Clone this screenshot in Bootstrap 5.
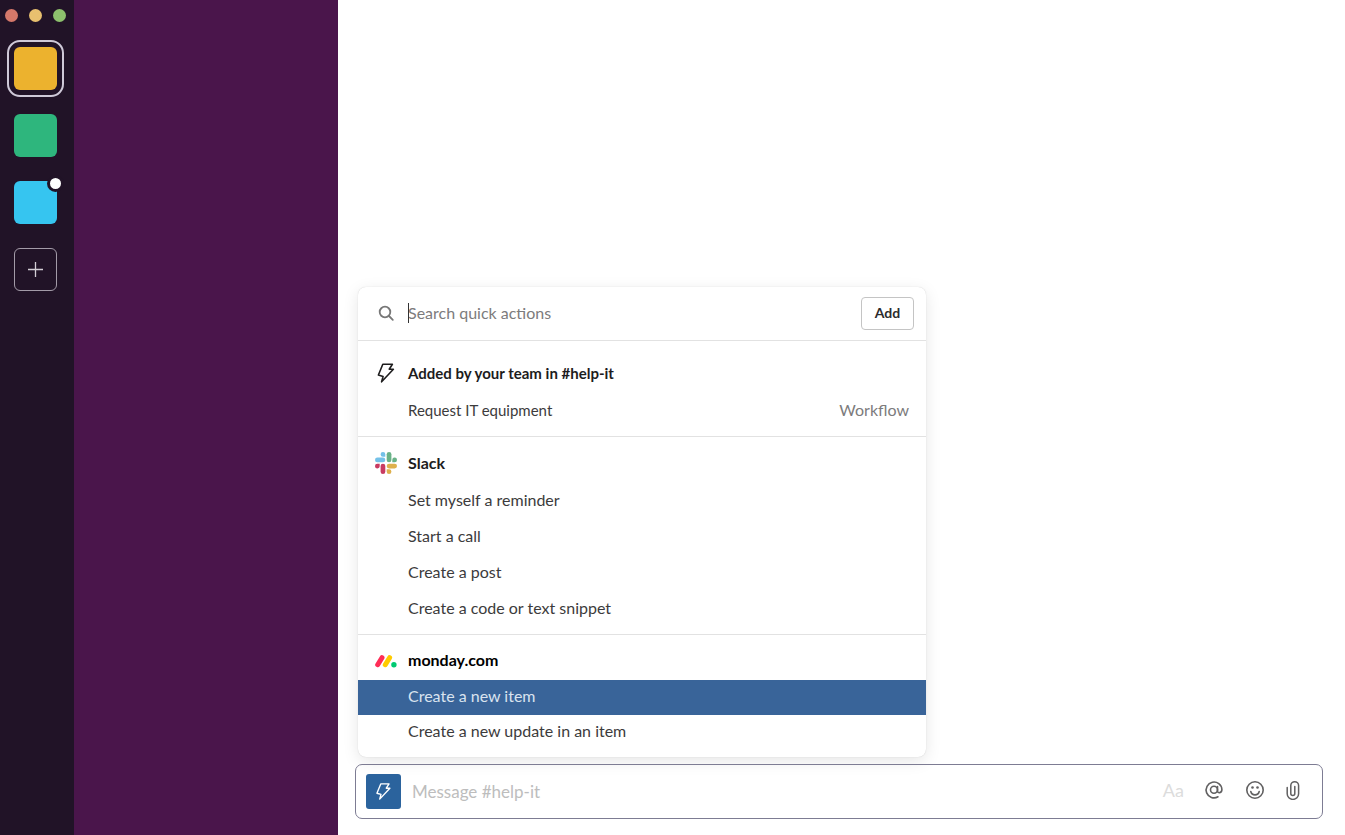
<!DOCTYPE html>
<html lang="en">
<head>
<meta charset="utf-8">
<meta name="viewport" content="width=device-width, initial-scale=1">
<title>#help-it</title>
<link rel="stylesheet" href="https://cdn.jsdelivr.net/npm/bootstrap@5.3.0/dist/css/bootstrap.min.css">
<style>
body{font-family:Lato,"Liberation Sans",sans-serif;font-size:16px;line-height:20px;color:#1d1c1d;background:#fff}
button,input{font-family:inherit}
.rail{width:74px;background:#211327;padding:9px 3px 0 0}
.lights{gap:11px;margin-bottom:25px}
.light{width:13px;height:13px;border-radius:50%}
.workspaces{gap:24px}
.ws{width:43px;height:43px;border:0;border-radius:6px;padding:0}
.ws-on{outline:2px solid #cfc9d8;outline-offset:5px}
.ws-add{border:1px solid #a39ba8;background:transparent}
.ws-dot{top:-6px;right:-7px;width:17px;height:17px;border-radius:50%;background:#fff;border:3px solid #211327}
.side{width:264px;background:#4a154b}
.main{padding:0 22px 16px 17px;gap:7px}
.panel{width:568px;margin-left:3px;border-radius:8px;background:#fff;box-shadow:0 0 1px rgba(0,0,0,.2),0 4px 16px rgba(0,0,0,.1)}
.search-row{height:54px;padding:0 12px 0 17px;border-bottom:1px solid #e2e2e2}
.search-row .ico,.search-row .position-relative{margin-bottom:2px}
.ico{width:22px;height:22px;margin-right:11px;flex:none}
.field{border:0;outline:0;background:transparent;padding:0;min-width:0}
.field::placeholder{color:#7c7b7c;opacity:1}
.caret{left:0;top:0;width:1px;height:20px;background:#333}
.btn-add{width:53px;height:33px;padding:0 0 2px;border:1px solid #c4c4c4;border-radius:4px;font-size:14px;font-weight:700;color:#2c2b2c;background:#fff}
.group{padding:6px 0 7px;border-bottom:1px solid #e2e2e2}
.group-first{padding-top:12px}
.group-last{padding-top:5px;border-bottom:0}
.group h2{height:40px;margin:0;padding-left:17px;font-size:16px;line-height:20px;font-weight:700}
.act{height:36px;width:100%;border:0;background:transparent;padding:0 17px 2px 50px;font-size:16px;color:#3c3b3c}
.group-last .act{height:35px;padding-bottom:3px}
.group-last h2{color:#000}
.act.on{background:#396499;color:#d9e3ef}
.kind{color:#7c7b7c}
.group h2.title-sm,.small-text{font-size:15px}
.composer{height:55px;border:1px solid #7d7c93;border-radius:7px;padding:0 20px 0 10px}
.bolt{width:35px;height:35px;border:0;border-radius:3px;background:#2b639d;padding:0;margin-right:11px}
.composer .field{font-size:17px}
.composer .field::placeholder{color:#bdbdbd}
.tool{border:0;background:transparent;padding:0 0 4px;color:#616061;line-height:20px}
.tool-aa{color:#dcdcdc;font-size:18px;margin-right:20px}
.tool-at{margin-right:21px}
.tool-face{margin-right:19px}
</style>
</head>
<body>
<svg class="d-none" aria-hidden="true"><symbol id="bolt" viewBox="0 0 22 22"><path d="M7.800 2.200h9.600l-3.200 5h4.200L6.600 19.800l1.500-5.400-4.700-1.400z" fill="none" stroke="currentColor" stroke-width="1.600" stroke-linejoin="round"/></symbol></svg>
<div class="d-flex min-vh-100">
  <nav class="rail d-flex flex-column align-items-center flex-shrink-0" aria-label="Workspaces">
    <div class="lights d-flex">
      <span class="light" style="background:#d5786a"></span><span class="light" style="background:#e8c06f"></span><span class="light" style="background:#8dc06d"></span>
    </div>
    <div class="workspaces d-flex flex-column">
      <button class="ws ws-on" style="background:#ecb22e" aria-label="Workspace 1"></button>
      <button class="ws" style="background:#2eb67d" aria-label="Workspace 2"></button>
      <button class="ws position-relative" style="background:#36c5f0" aria-label="Workspace 3"><span class="ws-dot position-absolute"></span></button>
      <button class="ws ws-add d-flex align-items-center justify-content-center" aria-label="Add workspace"><svg width="17" height="17" viewBox="0 0 17 17"><path d="M8.500 1v15M1 8.500h15" stroke="#d3ced5" stroke-width="1.300"/></svg></button>
    </div>
  </nav>
  <aside class="side flex-shrink-0"></aside>
  <main class="main flex-grow-1 d-flex flex-column justify-content-end">
    <section class="panel overflow-hidden mw-100">
      <div class="search-row d-flex align-items-center">
        <svg class="ico" viewBox="0 0 22 22" fill="none" stroke="#777" stroke-width="1.800"><circle cx="10" cy="10" r="5.300"/><path d="M14 14l3.800 3.800" stroke-linecap="round"/></svg>
        <div class="position-relative flex-grow-1 d-flex"><input class="field flex-grow-1" type="text" placeholder="Search quick actions" aria-label="Search quick actions"><span class="caret position-absolute"></span></div>
        <button class="btn-add">Add</button>
      </div>
      <div class="group group-first">
        <h2 class="title-sm d-flex align-items-center"><svg class="ico"><use href="#bolt"/></svg>Added by your team in #help-it</h2>
        <button class="act d-flex align-items-center justify-content-between"><span class="small-text">Request IT equipment</span><span class="kind">Workflow</span></button>
      </div>
      <div class="group">
        <h2 class="d-flex align-items-center"><svg class="ico" viewBox="0 0 22 22"><g fill="#74c1e8"><path d="M10.300 4.700H8.100A2.350 2.350 0 1 1 10.300 2.300z"/><rect y="5.600" width="10.300" height="4.700" rx="2.350"/></g><g fill="#69b287"><rect x="11.700" width="4.700" height="10.300" rx="2.350"/><path d="M17.300 10.300V8.100A2.350 2.350 0 1 1 19.700 10.300z"/></g><g fill="#deb04d"><rect x="11.700" y="11.700" width="10.300" height="4.700" rx="2.350"/><path d="M11.700 17.300h2.200A2.350 2.350 0 1 1 11.700 19.700z"/></g><g fill="#c83b62"><rect x="5.600" y="11.700" width="4.700" height="10.300" rx="2.350"/><path d="M4.700 11.700v2.200A2.350 2.350 0 1 1 2.300 11.700z"/></g></svg>Slack</h2>
        <button class="act d-flex align-items-center">Set myself a reminder</button>
        <button class="act d-flex align-items-center">Start a call</button>
        <button class="act d-flex align-items-center">Create a post</button>
        <button class="act d-flex align-items-center">Create a code or text snippet</button>
      </div>
      <div class="group group-last">
        <h2 class="d-flex align-items-center"><svg class="ico" viewBox="0 0 22 22" stroke-linecap="round" stroke-width="5"><path d="M2.700 15.700L7 8.700" stroke="#ff2d57"/><path d="M10.300 15.700L14.600 8.700" stroke="#ffcb00"/><circle cx="18.900" cy="15.700" r="2.700" fill="#00ca72"/></svg>monday.com</h2>
        <button class="act on d-flex align-items-center">Create a new item</button>
        <button class="act d-flex align-items-center">Create a new update in an item</button>
      </div>
    </section>
    <div class="composer d-flex align-items-center">
      <button class="bolt d-flex align-items-center justify-content-center text-white" aria-label="Quick actions"><svg width="19" height="19"><use href="#bolt"/></svg></button>
      <input class="field flex-grow-1" type="text" placeholder="Message #help-it" aria-label="Message #help-it">
      <button class="tool tool-aa" aria-label="Formatting">Aa</button>
      <button class="tool tool-at" aria-label="Mention"><svg class="d-block" width="20" height="20" viewBox="0 0 20 20" fill="none" stroke="currentColor" stroke-width="1.600" stroke-linecap="round"><circle cx="10" cy="9.800" r="3.500"/><path d="M13.500 6.500v4.500c0 2.600 4.400 2.300 4.400-1.500A7.900 7.900 0 1 0 14 16.800"/></svg></button>
      <button class="tool tool-face" aria-label="Emoji"><svg class="d-block" width="20" height="20" viewBox="0 0 20 20" fill="none" stroke="currentColor" stroke-width="1.600" stroke-linecap="round"><circle cx="10" cy="10" r="8.200"/><path d="M5.800 11.500a4.300 4.300 0 0 0 8.400 0"/><g fill="currentColor" stroke="none"><circle cx="7.500" cy="7.500" r="1.300"/><circle cx="12.500" cy="7.500" r="1.300"/></g></svg></button>
      <button class="tool" aria-label="Attach"><svg class="d-block" width="18" height="20" viewBox="0 0 18 20" fill="none" stroke="currentColor" stroke-width="1.500" stroke-linecap="round"><path d="M3.200 7.500v6.200a5.700 5.700 0 0 0 11.400 0V5.600a3.900 3.900 0 0 0-7.800 0v7.800a2 2 0 0 0 4 0V6.500"/></svg></button>
    </div>
  </main>
</div>
<script src="https://cdn.jsdelivr.net/npm/bootstrap@5.3.0/dist/js/bootstrap.bundle.min.js"></script>
</body>
</html>
